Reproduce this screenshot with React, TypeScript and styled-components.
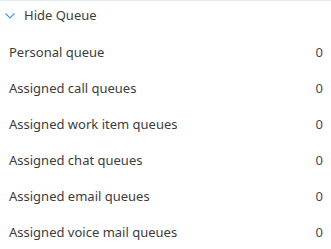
import React from 'react';
import styled, { createGlobalStyle } from 'styled-components';

const GlobalStyle = createGlobalStyle`
  html, body {
    margin: 0;
    padding: 0;
    background: #ffffff;
  }
  body {
    font-family: "Noto Sans", "Open Sans", sans-serif;
    -webkit-font-smoothing: antialiased;
  }
`;

const QueuePanel = styled.section`
  width: 331px;
  border-top: 1px solid #e6f0f2;
  box-sizing: border-box;
`;

const ToggleButton = styled.button`
  display: flex;
  align-items: center;
  gap: 9px;
  height: 28px;
  width: 100%;
  padding: 0 0 0 5px;
  margin: 0;
  border: none;
  background: transparent;
  font-family: inherit;
  font-size: 13px;
  color: #3c3c3c;
  cursor: pointer;
  text-align: left;
`;

const Chevron = styled.svg`
  width: 10px;
  height: 6px;
  flex: 0 0 auto;
  margin-top: 1px;
`;

const QueueList = styled.ul`
  list-style: none;
  margin: 5px 0 0;
  padding: 0;
`;

const QueueRow = styled.li`
  display: flex;
  align-items: center;
  justify-content: space-between;
  height: 36px;
  padding: 0 8px 0 9px;
  font-size: 13px;
  color: #3c3c3c;
`;

const QueueCount = styled.span`
  color: #4a4a4a;
`;

const queues = [
  { label: 'Personal queue', count: 0 },
  { label: 'Assigned call queues', count: 0 },
  { label: 'Assigned work item queues', count: 0 },
  { label: 'Assigned chat queues', count: 0 },
  { label: 'Assigned email queues', count: 0 },
  { label: 'Assigned voice mail queues', count: 0 },
];

export default function App() {
  return (
    <>
      <GlobalStyle />
      <QueuePanel>
        <ToggleButton type="button">
          <Chevron viewBox="0 0 10 6">
            <path d="M0.5 0.5 L5 5 L9.5 0.5" fill="none" stroke="#3d9bd6" strokeWidth="1.1" />
          </Chevron>
          Hide Queue
        </ToggleButton>
        <QueueList>
          {queues.map((q) => (
            <QueueRow key={q.label}>
              <span>{q.label}</span>
              <QueueCount>{q.count}</QueueCount>
            </QueueRow>
          ))}
        </QueueList>
      </QueuePanel>
    </>
  );
}
